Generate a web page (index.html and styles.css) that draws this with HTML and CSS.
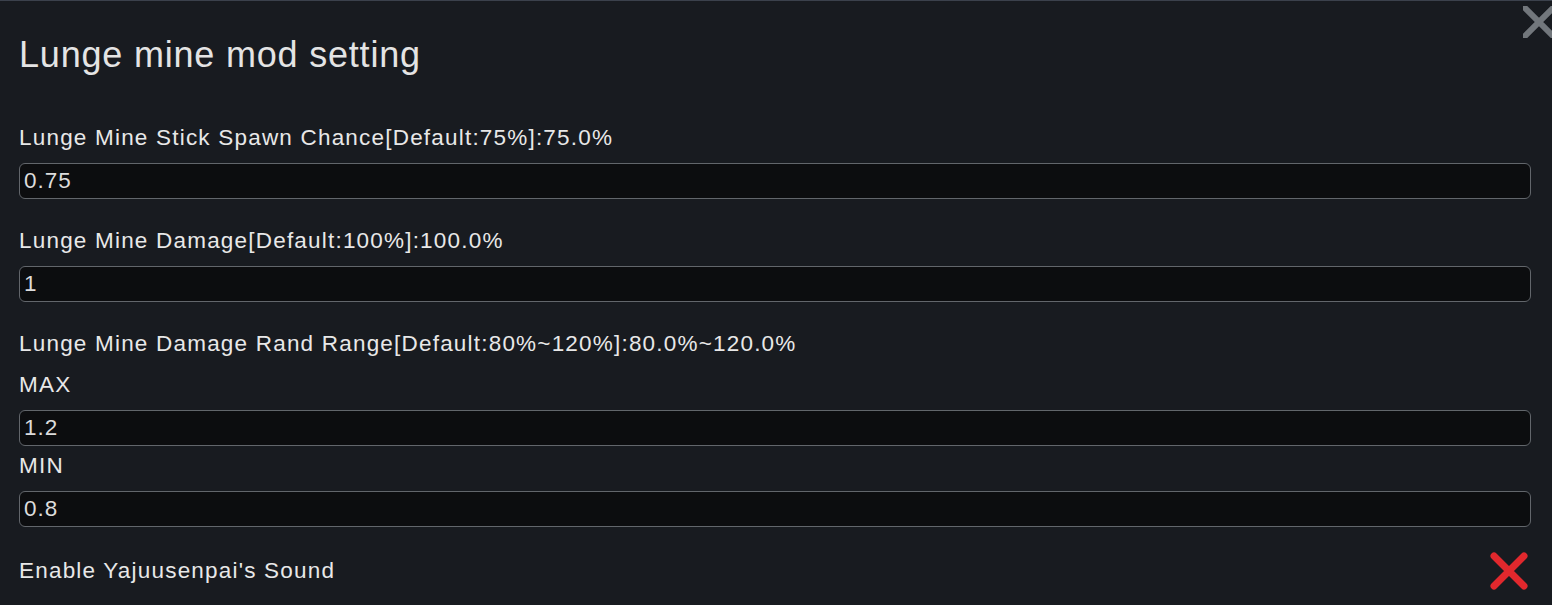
FILE: index.html
```html
<!DOCTYPE html>
<html lang="en">
<head>
  <meta charset="UTF-8">
  <meta name="viewport" content="width=device-width, initial-scale=1.0">
  <title>Lunge mine mod setting</title>
  <link rel="stylesheet" href="styles.css">
</head>
<body>
  <div class='panel'>
    <h1 class='title'>Lunge mine mod setting</h1>
    <!-- 右上角关闭按钮，一半被窗口边缘切掉 -->
    <svg class='close' viewBox="0 0 32 32" width="32" height="32">
      <path d="M-3 -3 L35 35 M35 -3 L-3 35" stroke="#72777c" stroke-width="6" fill="none"/>
    </svg>

    <div class='field first'>
      <div class='label'>Lunge Mine Stick Spawn Chance[Default:75%]:75.0%</div>
      <input class='box' type="text" value="0.75">
    </div>

    <div class='field'>
      <div class='label'>Lunge Mine Damage[Default:100%]:100.0%</div>
      <input class='box' type="text" value="1">
    </div>

    <div class='field'>
      <div class='label range'>Lunge Mine Damage Rand Range[Default:80%~120%]:80.0%~120.0%</div>
      <div class='label'>MAX</div>
      <input class='box' type="text" value="1.2">
      <div class='label sub'>MIN</div>
      <input class='box' type="text" value="0.8">
    </div>

    <div class='toggle'>
      <div class='label flat'>Enable Yajuusenpai's Sound</div>
      <svg class='check' viewBox="0 0 38 38" width="38" height="38">
        <path d="M4 4 L34 34 M34 4 L4 34" stroke="#e1282d" stroke-width="7" stroke-linecap="round" fill="none"/>
      </svg>
    </div>
  </div>
</body>
</html>
```

FILE: styles.css
```css
body{
  margin:0px;
  background-color:#181b20;
  font-family:"Liberation Sans", Arial, sans-serif;
  color:#e6e6e6;
}
.panel{
  position:relative;
  height:604px;
  border-top:1px solid #3b414c;
  padding:0 21px 0 19px;
  overflow:hidden;
}
.title{
  margin:33px 0 0 0;
  font-size:36px;
  line-height:42px;
  font-weight:normal;
  letter-spacing:0.8px;
  color:#e4e4e4;
}
.close{
  position:absolute;
  top:5px;
  right:-3px;
}
.field{
  margin-top:29px;
}
.field.first{
  margin-top:49px;
}
.label{
  font-size:22.5px;
  line-height:26px;
  letter-spacing:1.2px;
  margin-bottom:12px;
  color:#e8e8e8;
}
.label.range{
  margin-bottom:15px;
}
.label.sub{
  margin-top:7px;
}
.label.flat{
  margin-bottom:0;
}
.box{
  display:block;
  box-sizing:border-box;
  width:100%;
  height:36px;
  margin:0;
  padding:0 0 0 4px;
  background-color:#0c0d0f;
  border:1.5px solid #62666b;
  border-radius:6px;
  font-family:"Liberation Sans", Arial, sans-serif;
  font-size:22.5px;
  letter-spacing:1px;
  color:#dcdcdc;
  outline:none;
}
.toggle{
  margin-top:25px;
  display:flex;
  justify-content:space-between;
  align-items:center;
}
.check{
  margin-right:3px;
}
```
